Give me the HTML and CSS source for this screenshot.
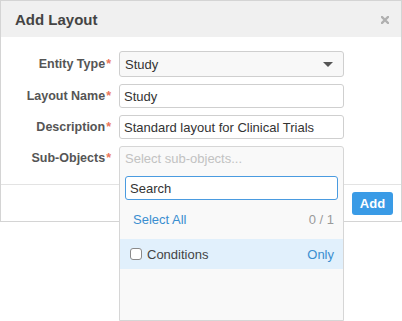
FILE: index.html
```html
<!DOCTYPE html>
<html lang="en">
<head>
    <meta charset="UTF-8">
    <title>Add Layout</title>
    <link rel="stylesheet" href="styles.css">
</head>
<body>
    <div class="modal">
        <div class="modal-header">
            <h3>Add Layout</h3>
            <svg class="close" width="8" height="8" viewBox="0 0 8 8">
                <path d="M1 1 L7 7 M7 1 L1 7" stroke="#b0b0b0" stroke-width="2.4" stroke-linecap="square"/>
            </svg>
        </div>
        <div class="modal-body">
            <div class="row">
                <label>Entity Type<span class="req">*</span></label>
                <div class="select">
                    <span>Study</span>
                    <span class="caret"></span>
                </div>
            </div>
            <div class="row">
                <label>Layout Name<span class="req">*</span></label>
                <input class="field" type="text" value="Study">
            </div>
            <div class="row">
                <label>Description<span class="req">*</span></label>
                <input class="field" type="text" value="Standard layout for Clinical Trials">
            </div>
            <div class="row">
                <label>Sub-Objects<span class="req">*</span></label>
                <div class="multi">
                    <div class="multi-menu">
                        <div class="placeholder">Select sub-objects...</div>
                        <input class="search" type="text" placeholder="Search">
                        <div class="menu-head">
                            <a>Select All</a>
                            <span class="count">0 / 1</span>
                        </div>
                        <div class="option">
                            <span class="check"></span>
                            <span class="opt-label">Conditions</span>
                            <a>Only</a>
                        </div>
                    </div>
                </div>
            </div>
        </div>
        <div class="modal-footer">
            <button>Add</button>
        </div>
    </div>
</body>
</html>
```

FILE: styles.css
```css
*,
*::before,
*::after{
    margin: 0;
    padding: 0;
    box-sizing: border-box;
}
html,
body{
    min-height: 321px;
}
body{
    background-color: #ffffff;
    font-family: "Liberation Sans", Arial, sans-serif;
    font-size: 13px;
    color: #333333;
}
.modal{
    width: 402px;
    height: 222px;
    border: 1px solid #d4d4d4;
    background-color: #ffffff;
}
.modal-header{
    height: 36px;
    background-color: #f0f0f0;
    display: flex;
    align-items: center;
    justify-content: space-between;
    padding: 0 12px 0 14px;
}
.modal-header h3{
    font-size: 15px;
    font-weight: bold;
    color: #444444;
}
.close{
    margin-top: 1px;
}
.modal-body{
    height: 148px;
    padding-top: 14px;
    border-bottom: 1px solid #e3e3e3;
}
.row{
    display: flex;
    align-items: center;
    margin-bottom: 7px;
}
.row label{
    width: 110px;
    text-align: right;
    margin-right: 8px;
    font-weight: bold;
    font-size: 12.5px;
    color: #555555;
}
.req{
    color: #e9765c;
    margin-left: 1px;
}
.select{
    width: 225px;
    height: 26px;
    border: 1px solid #cfcfcf;
    border-radius: 3px;
    background-color: #f8f8f8;
    display: flex;
    align-items: center;
    justify-content: space-between;
    padding: 0 10px 0 5px;
}
.caret{
    width: 0;
    height: 0;
    border-left: 5px solid transparent;
    border-right: 5px solid transparent;
    border-top: 5px solid #555555;
}
.field{
    width: 225px;
    height: 24px;
    border: 1px solid #cfcfcf;
    border-radius: 3px;
    padding: 0 4px;
    font-family: inherit;
    font-size: 13px;
    color: #333333;
    outline: none;
}
.multi{
    position: relative;
    width: 225px;
    height: 24px;
}
.multi-menu{
    position: absolute;
    z-index: 10;
    top: 0;
    left: 0;
    width: 225px;
    height: 175px;
    background-color: #f9f9f9;
    border: 1px solid #d6d6d6;
    border-radius: 3px 3px 0 0;
}
.placeholder{
    height: 26px;
    line-height: 23px;
    padding-left: 5px;
    color: #c2c2c2;
}
.search{
    display: block;
    width: 213px;
    height: 24px;
    margin: 3px 0 0 5px;
    border: 1px solid #4a9be0;
    border-radius: 3px;
    padding: 0 4px;
    font-family: inherit;
    font-size: 13px;
    outline: none;
    background-color: #ffffff;
}
.search::placeholder{
    color: #333333;
}
.menu-head{
    display: flex;
    justify-content: space-between;
    height: 39px;
    align-items: center;
    padding: 0 9px 0 13px;
    color: #3a8ed0;
}
.count{
    color: #9a9a9a;
}
.option{
    height: 30px;
    background-color: #e1f0fc;
    display: flex;
    align-items: center;
    padding: 0 9px 0 10px;
}
.check{
    width: 12px;
    height: 12px;
    border: 1px solid #8a8a8a;
    border-radius: 3px;
    background-color: #ffffff;
    margin-right: 5px;
}
.opt-label{
    flex: 1;
    color: #444444;
}
.option a{
    color: #3a8ed0;
}
.modal-footer{
    display: flex;
    justify-content: flex-end;
    padding: 7px 8px 0 0;
}
button{
    width: 41px;
    height: 23px;
    border: none;
    border-radius: 3px;
    background-color: #3a9be6;
    color: #ffffff;
    font-family: inherit;
    font-weight: bold;
    font-size: 13px;
}
```
